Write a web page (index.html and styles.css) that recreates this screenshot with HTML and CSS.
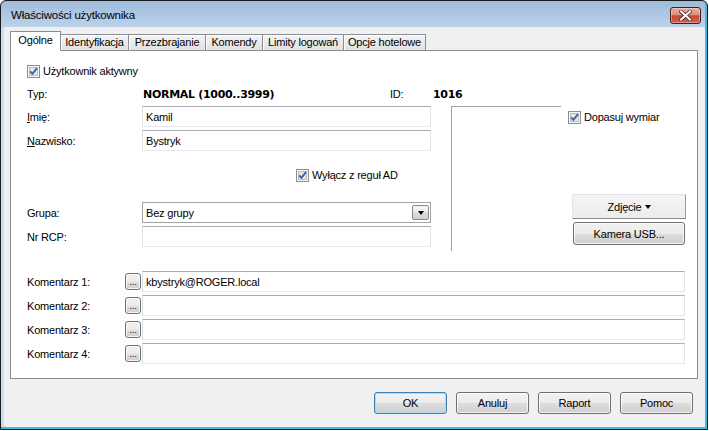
FILE: index.html
```html
<!DOCTYPE html>
<html lang="pl">
<head>
<meta charset="utf-8">
<title>Właściwości użytkownika</title>
<link rel="stylesheet" href="styles.css">
</head>
<body>
<div class="window">
  <div class="titlebar">
    <span class="title">Właściwości użytkownika</span>
    <div class="close">
      <svg width="13" height="11" viewBox="0 0 13 11">
        <path d="M2 1.5 L11 9.5 M11 1.5 L2 9.5" stroke="#4a2a26" stroke-width="3.6" stroke-linecap="square" fill="none"/>
        <path d="M2 1.5 L11 9.5 M11 1.5 L2 9.5" stroke="#ffffff" stroke-width="2" stroke-linecap="square" fill="none"/>
      </svg>
    </div>
  </div>
  <div class="client">
    <div class="tabs">
      <div class="tab active w1">Ogólne</div>
      <div class="tab w2">Identyfikacja</div>
      <div class="tab w3">Przezbrajanie</div>
      <div class="tab w4">Komendy</div>
      <div class="tab w5">Limity logowań</div>
      <div class="tab w6">Opcje hotelowe</div>
    </div>
    <div class="page">
      <div class="check-row">
        <svg class="cb" width="13" height="13" viewBox="0 0 13 13"><rect x="0.5" y="0.5" width="12" height="12" fill="#f6f6f6" stroke="#8e8f8f"/><rect x="2.5" y="2.5" width="8" height="8" fill="#e4e6e9" stroke="#b9bec6"/><path d="M3.2 6.4 L5.4 8.8 L10 3.2" stroke="#3f5fa6" stroke-width="1.9" fill="none"/></svg>
        <span>Użytkownik aktywny</span>
      </div>
      <div class="typ-row">
        <span class="lbl-typ">Typ:</span>
        <span class="bold typ-val">NORMAL (1000..3999)</span>
        <span class="lbl-id">ID:</span>
        <span class="bold">1016</span>
      </div>
      <div class="mid">
        <div class="left">
          <div class="field"><span class="lbl"><u>I</u>mię:</span><div class="input">Kamil</div></div>
          <div class="field"><span class="lbl"><u>N</u>azwisko:</span><div class="input">Bystryk</div></div>
          <div class="check-row ad-row">
            <svg class="cb" width="13" height="13" viewBox="0 0 13 13"><rect x="0.5" y="0.5" width="12" height="12" fill="#f6f6f6" stroke="#8e8f8f"/><rect x="2.5" y="2.5" width="8" height="8" fill="#e4e6e9" stroke="#b9bec6"/><path d="M3.2 6.4 L5.4 8.8 L10 3.2" stroke="#3f5fa6" stroke-width="1.9" fill="none"/></svg>
            <span>Wyłącz z reguł AD</span>
          </div>
          <div class="field grupa"><span class="lbl">Grupa:</span><div class="select"><span>Bez grupy</span><span class="dd"><span class="tri"></span></span></div></div>
          <div class="field"><span class="lbl">Nr RCP:</span><div class="input"></div></div>
        </div>
        <div class="photo"></div>
        <div class="right">
          <div class="check-row dopasuj">
            <svg class="cb" width="13" height="13" viewBox="0 0 13 13"><rect x="0.5" y="0.5" width="12" height="12" fill="#f6f6f6" stroke="#8e8f8f"/><rect x="2.5" y="2.5" width="8" height="8" fill="#e4e6e9" stroke="#b9bec6"/><path d="M3.2 6.4 L5.4 8.8 L10 3.2" stroke="#3f5fa6" stroke-width="1.9" fill="none"/></svg>
            <span>Dopasuj wymiar</span>
          </div>
          <div class="flatbtn">Zdjęcie<span class="tri tri-btn"></span></div>
          <div class="btn kamera">Kamera USB...</div>
        </div>
      </div>
      <div class="comments">
        <div class="crow"><span class="clbl">Komentarz 1:</span><span class="dots">...</span><div class="input cinput">kbystryk@ROGER.local</div></div>
        <div class="crow"><span class="clbl">Komentarz 2:</span><span class="dots">...</span><div class="input cinput"></div></div>
        <div class="crow"><span class="clbl">Komentarz 3:</span><span class="dots">...</span><div class="input cinput"></div></div>
        <div class="crow"><span class="clbl">Komentarz 4:</span><span class="dots">...</span><div class="input cinput"></div></div>
      </div>
    </div>
    <div class="buttons">
      <div class="btn dbtn default">OK</div>
      <div class="btn dbtn">Anuluj</div>
      <div class="btn dbtn">Raport</div>
      <div class="btn dbtn">Pomoc</div>
    </div>
  </div>
</div>
</body>
</html>
```

FILE: styles.css
```css
html, body {
  margin: 0;
  padding: 0;
  background: #ffffff;
}

body {
  font-family: "Liberation Sans", Arial, sans-serif;
  font-size: 11px;
  letter-spacing: -0.2px;
  color: #000;
}

.window {
  width: 708px;
  height: 430px;
  box-sizing: border-box;
  border: 1px solid #1a1a1a;
  border-radius: 6px 6px 0 0;
  background: linear-gradient(#9fbbdb 0px, #bcd2ea 26px, #c9def2 26px, #c9def2 100%);
  box-shadow: inset -2px -2px 0 #4ab4e6;
  padding: 0 3px 3px 3px;
  display: flex;
  flex-direction: column;
  overflow: hidden;
}

.titlebar {
  height: 26px;
  flex: none;
  display: flex;
  align-items: flex-start;
  justify-content: space-between;
  padding: 0 3px 0 7px;
}

.title {
  margin-top: 8px;
  font-size: 11.5px;
  line-height: 13px;
}

.close {
  margin-top: 6px;
  width: 31px;
  height: 17px;
  box-sizing: border-box;
  border: 1px solid #3e1f1b;
  border-radius: 3px;
  background: linear-gradient(#ebad9f 0%, #dd8f7d 45%, #c84a32 52%, #cf6048 100%);
  box-shadow: inset 0 0 0 1px rgba(255, 220, 210, 0.45);
  display: flex;
  align-items: center;
  justify-content: center;
}

.client {
  flex: 1;
  background: #f0f0f0;
  padding: 4px 6px 0 6px;
  box-shadow: 1px 1px 0 #e8f2fb;
}

.tabs {
  display: flex;
  align-items: flex-end;
  height: 19px;
}

.tab {
  box-sizing: border-box;
  height: 16px;
  border: 1px solid #898c95;
  border-bottom: none;
  background: linear-gradient(#f4f4f4, #ebebeb 50%, #e1e1e1 100%);
  box-shadow: inset 1px 1px 0 #ffffff;
  margin-left: -1px;
  display: flex;
  align-items: center;
  justify-content: center;
  line-height: 13px;
}

.tab.active {
  height: 20px;
  margin-left: 0;
  margin-bottom: -1px;
  background: #ffffff;
  box-shadow: none;
  position: relative;
  z-index: 1;
  padding-bottom: 2px;
}

.w1 { width: 51px; }
.w2 { width: 69px; }
.w3 { width: 78px; }
.w4 { width: 58px; }
.w5 { width: 82px; }
.w6 { width: 83px; }

.page {
  height: 329px;
  box-sizing: border-box;
  border: 1px solid #898c95;
  background: #ffffff;
  padding: 14px 0 0 16px;
}

.check-row {
  display: flex;
  align-items: center;
  height: 13px;
  gap: 3px;
  line-height: 13px;
}

.cb {
  flex: none;
  display: block;
}

.typ-row {
  margin-top: 10px;
  height: 13px;
  display: flex;
  align-items: center;
  line-height: 13px;
}

.lbl-typ {
  width: 116px;
}

.typ-val {
  width: 247px;
}

.lbl-id {
  width: 43px;
}

.bold {
  font-family: "DejaVu Sans", "Liberation Sans", sans-serif;
  font-weight: bold;
  font-size: 11px;
  letter-spacing: -0.3px;
}

.mid {
  margin-top: 5px;
  display: flex;
  align-items: flex-start;
}

.left {
  width: 404px;
  flex: none;
}

.field {
  display: flex;
  align-items: center;
  height: 21px;
}

.field + .field {
  margin-top: 3px;
}

.lbl {
  width: 115px;
  flex: none;
}

.input {
  box-sizing: border-box;
  height: 21px;
  width: 289px;
  border: 1px solid;
  border-color: #abadb3 #e2e3ea #e3e9ef #dbdfe6;
  background: #ffffff;
  padding: 0 3px;
  display: flex;
  align-items: center;
}

.ad-row {
  margin-top: 18px;
  padding-left: 269px;
}

.field.grupa {
  margin-top: 20px;
}

.select {
  box-sizing: border-box;
  height: 21px;
  width: 289px;
  border: 1px solid #a3a3a3;
  background: #ffffff;
  padding: 0 1px 0 3px;
  display: flex;
  align-items: center;
  justify-content: space-between;
}

.dd {
  box-sizing: border-box;
  width: 17px;
  height: 15px;
  border: 1px solid #8a8a8a;
  border-radius: 2px;
  background: linear-gradient(#f7f7f7, #ececec 50%, #dcdcdc 50%, #d2d2d2);
  display: flex;
  align-items: center;
  justify-content: center;
}

.tri {
  width: 0;
  height: 0;
  border-left: 3.5px solid transparent;
  border-right: 3.5px solid transparent;
  border-top: 4px solid #000;
}

.photo {
  flex: none;
  width: 110px;
  height: 145px;
  box-sizing: border-box;
  margin-left: 20px;
  border-top: 1px solid #a0a0a0;
  border-left: 1px solid #a0a0a0;
}

.right {
  flex: none;
  margin-left: 7px;
  display: flex;
  flex-direction: column;
  align-items: flex-start;
}

.dopasuj {
  margin-top: 5px;
}

.flatbtn {
  box-sizing: border-box;
  margin-top: 70px;
  margin-left: 4px;
  width: 114px;
  height: 25px;
  border: 1px solid;
  border-color: #e4e4e4 #9a9a9a #8c8c8c #e4e4e4;
  background: linear-gradient(#f5f5f5, #ececec);
  display: flex;
  align-items: center;
  justify-content: center;
  gap: 3px;
}

.tri-btn {
  margin-top: 1px;
}

.btn {
  box-sizing: border-box;
  border: 1px solid #707070;
  border-radius: 3px;
  background: linear-gradient(#f2f2f2 0%, #ebebeb 50%, #dddddd 51%, #cfcfcf 100%);
  box-shadow: inset 0 0 0 1px rgba(255, 255, 255, 0.75);
  display: flex;
  align-items: center;
  justify-content: center;
}

.kamera {
  margin-top: 3px;
  margin-left: 5px;
  width: 112px;
  height: 23px;
}

.comments {
  margin-top: 20px;
}

.crow {
  display: flex;
  align-items: center;
  height: 21px;
}

.crow + .crow {
  margin-top: 3px;
}

.clbl {
  width: 98px;
  flex: none;
}

.dots {
  box-sizing: border-box;
  width: 16px;
  height: 17px;
  margin-right: 1px;
  border: 1px solid #707070;
  border-radius: 3px;
  background: linear-gradient(#f2f2f2 0%, #ebebeb 50%, #dddddd 51%, #cfcfcf 100%);
  box-shadow: inset 0 0 0 1px rgba(255, 255, 255, 0.75);
  font-size: 9px;
  line-height: 9px;
  letter-spacing: 0;
  display: flex;
  justify-content: center;
  align-items: flex-end;
  padding-bottom: 2px;
}

.cinput {
  width: 543px;
}

.buttons {
  margin-top: 13px;
  display: flex;
  justify-content: flex-end;
  gap: 9px;
  padding-right: 5px;
}

.dbtn {
  width: 73px;
  height: 22px;
}

.dbtn.default {
  border-color: #3c7fb1;
  box-shadow: inset 0 0 0 1px #a6def7;
}
```
